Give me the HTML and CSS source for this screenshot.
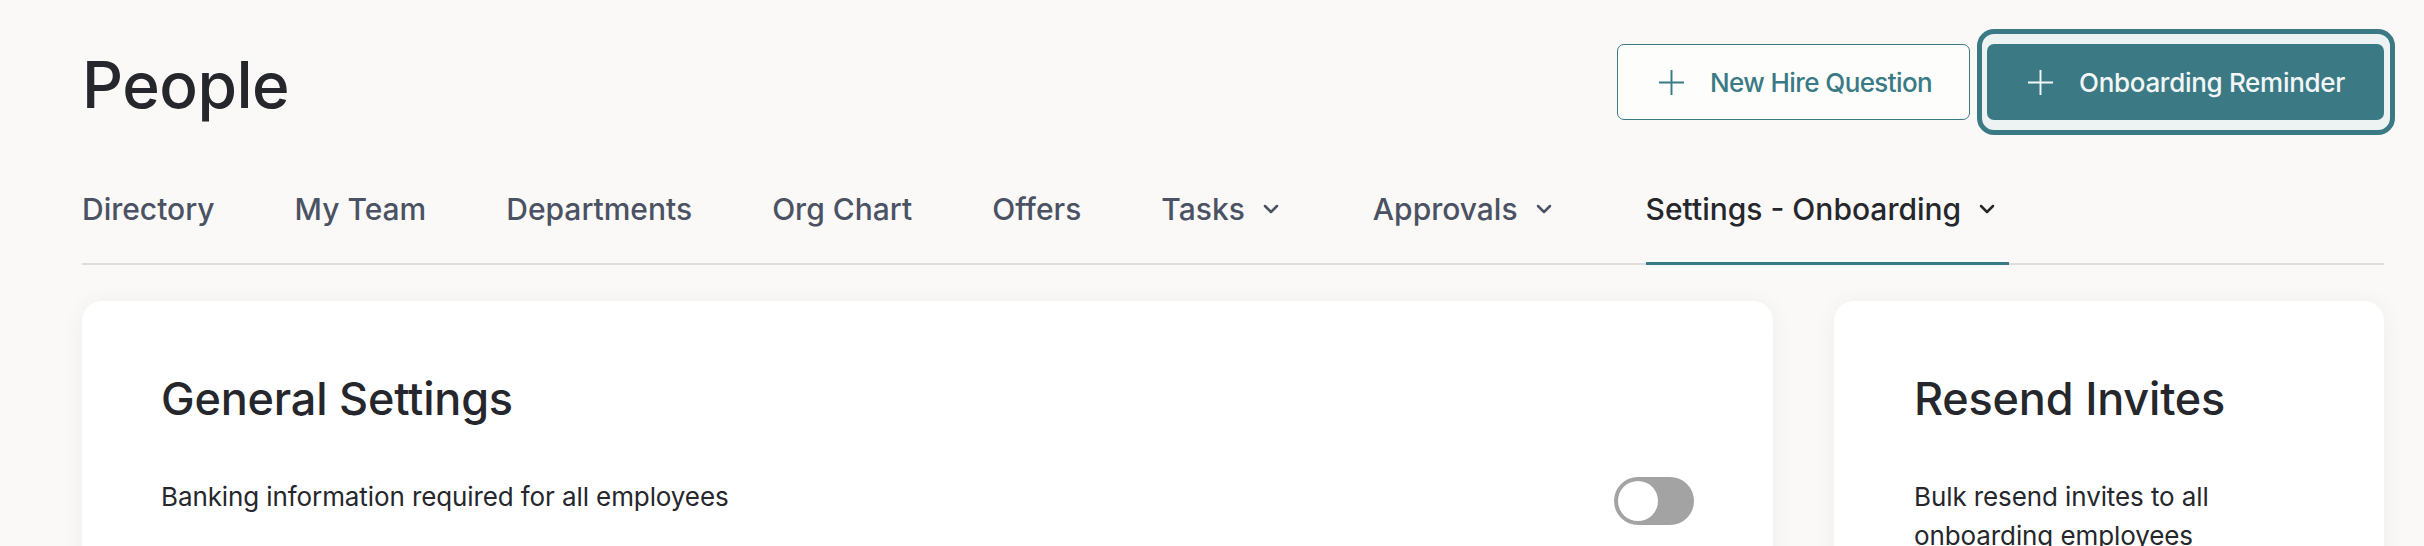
FILE: index.html
```html
<!DOCTYPE html>
<html lang="en">
<head>
    <meta charset="UTF-8">
    <meta name="viewport" content="width=device-width, initial-scale=1.0">
    <title>People</title>

    <link rel="stylesheet" href="styles.css">
</head>
<body>
    <div class="page">
        <header class="page-header">
            <h1 class="page-title">People</h1>
            <div class="header-actions">
                <button class="btn btn-outline">
                    <svg class="btn-icon" viewBox="0 0 28 28"><path d="M14 1v26M1 14h26"/></svg>
                    New Hire Question
                </button>
                <button class="btn btn-primary is-focused">
                    <svg class="btn-icon" viewBox="0 0 28 28"><path d="M14 1v26M1 14h26"/></svg>
                    Onboarding Reminder
                </button>
            </div>
        </header>

        <nav class="tabs">
            <a class="tab">Directory</a>
            <a class="tab">My Team</a>
            <a class="tab">Departments</a>
            <a class="tab">Org Chart</a>
            <a class="tab">Offers</a>
            <a class="tab has-menu">Tasks
                <svg class="chevron" viewBox="0 0 16 10"><path d="M2 2l6 6 6-6"/></svg>
            </a>
            <a class="tab has-menu">Approvals
                <svg class="chevron" viewBox="0 0 16 10"><path d="M2 2l6 6 6-6"/></svg>
            </a>
            <a class="tab has-menu active">Settings - Onboarding
                <svg class="chevron" viewBox="0 0 16 10"><path d="M2 2l6 6 6-6"/></svg>
            </a>
        </nav>

        <div class="content">
            <section class="card card-main">
                <h2 class="card-title">General Settings</h2>
                <div class="setting-row">
                    <span class="setting-label">Banking information required for all employees</span>
                    <span class="toggle"><span class="toggle-knob"></span></span>
                </div>
            </section>

            <aside class="card card-side">
                <h2 class="card-title">Resend Invites</h2>
                <p class="card-text">Bulk resend invites to all onboarding employees</p>
            </aside>
        </div>
    </div>
</body>
</html>
```

FILE: styles.css
```css
body {
    font-family: 'Inter', 'Noto Sans', sans-serif;
    margin: 0;
    padding: 0;
    background-color: #faf9f7;
    color: #25272c;
    overflow: hidden;
}

.page {
    padding: 44px 40px 0 82px;
}

.page-header {
    display: flex;
    justify-content: space-between;
    align-items: flex-start;
}

.page-title {
    margin: 0;
    padding-top: 9px;
    font-size: 64px;
    font-weight: 500;
    line-height: 64px;
    letter-spacing: -0.5px;
}

.header-actions {
    display: flex;
    gap: 17px;
}

.btn {
    display: flex;
    align-items: center;
    height: 76px;
    padding: 0 20px 0 40px;
    font-family: inherit;
    font-size: 26px;
    font-weight: 500;
    letter-spacing: -0.3px;
    white-space: nowrap;
    border-radius: 7px;
    cursor: pointer;
    position: relative;
}

.btn-icon {
    flex-shrink: 0;
    width: 27px;
    height: 27px;
    margin-right: 25px;
    fill: none;
    stroke: currentColor;
    stroke-width: 2;
}

.btn-outline {
    width: 353px;
    background-color: #fdfdfc;
    color: #3a7a84;
    border: 1.5px solid #3a7a84;
    letter-spacing: -0.6px;
}

.btn-primary {
    width: 397px;
    background-color: #3b7a85;
    color: #f3f6f7;
    border: none;
}

.is-focused::before {
    content: "";
    position: absolute;
    top: -15px;
    bottom: -15px;
    left: -10px;
    right: -11px;
    border: 5px solid #3b7a85;
    border-radius: 17px;
    background-color: #edf2f3;
    z-index: -1;
}

.tabs {
    display: flex;
    gap: 80px;
    margin-top: 71px;
    border-bottom: 2px solid #dedddb;
}

.tab {
    display: flex;
    align-items: center;
    padding-bottom: 35px;
    margin-bottom: -2px;
    font-size: 30px;
    font-weight: 500;
    line-height: 36px;
    color: #4b5263;
    border-bottom: 3px solid transparent;
}

.tab.has-menu {
    padding-right: 14px;
}

.tab.active {
    color: #25272c;
    border-bottom-color: #3b7a85;
}

.chevron {
    width: 16px;
    height: 10px;
    margin-left: 18px;
    fill: none;
    stroke: currentColor;
    stroke-width: 2.5;
    stroke-linecap: round;
    stroke-linejoin: round;
}

.content {
    display: flex;
    gap: 61px;
    margin-top: 36px;
}

.card {
    background-color: white;
    border-radius: 20px;
    box-shadow: 0 2px 24px rgba(0, 0, 0, 0.05);
    padding: 71px 79px;
    min-height: 400px;
}

.card-main {
    flex: 1;
}

.card-side {
    width: 550px;
    box-sizing: border-box;
    padding: 71px 80px;
}

.card-title {
    margin: 0 0 51px;
    font-size: 45px;
    font-weight: 500;
    line-height: 54px;
    letter-spacing: -0.2px;
}

.setting-row {
    display: flex;
    justify-content: space-between;
    align-items: flex-start;
}

.setting-label,
.card-text {
    font-size: 26px;
    line-height: 39px;
    letter-spacing: -0.1px;
}

.card-text {
    margin: 0;
}

.toggle {
    width: 80px;
    height: 48px;
    border-radius: 24px;
    background-color: #a3a3a3;
    box-sizing: border-box;
    padding: 4px;
}

.toggle-knob {
    display: block;
    width: 40px;
    height: 40px;
    border-radius: 50%;
    background-color: white;
}
```
